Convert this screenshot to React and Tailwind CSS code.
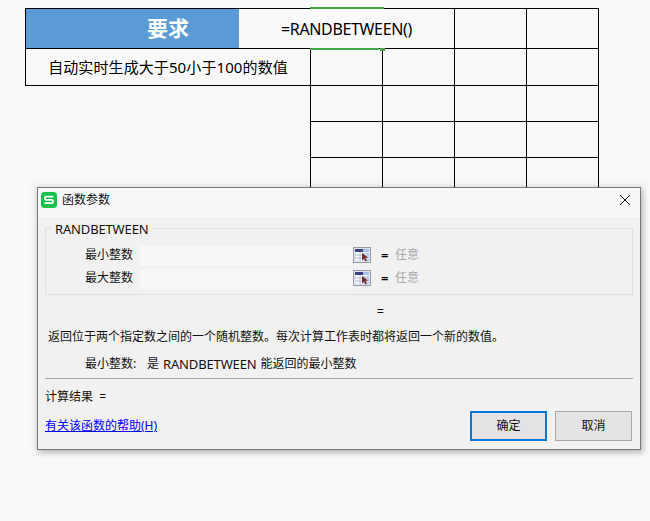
import React from 'react'

const line = 'border-black'

function RefIcon() {
  return (
    <svg width="18" height="16" viewBox="0 0 18 16" className="shrink-0 mb-[2px]">
      <rect x="0.5" y="0.5" width="17" height="15" fill="#eef0f6" stroke="#9a9aa6" />
      <rect x="2" y="2" width="14" height="12" fill="#fbfbff" stroke="#b4bbd6" strokeWidth="0.5" />
      <rect x="2" y="2" width="8" height="3" fill="#3a4280" />
      <rect x="10" y="2" width="6" height="3" fill="#a7c0ea" />
      <rect x="10" y="6" width="6" height="8" fill="#b8d0f4" />
      <path d="M2 8H10M2 11H10M7 5V14" stroke="#b4bbd0" strokeWidth="1" />
      <path d="M9 6L9 13.5L11 11.5L12.5 14.5L14 14L12.5 11L15 10.5Z" fill="#7a2a20" />
    </svg>
  )
}

function WpsLogo() {
  return (
    <svg width="16" height="16" viewBox="0 0 16 16" className="shrink-0">
      <rect width="16" height="16" rx="3.5" fill="#16c24a" />
      <path d="M12.5 4.6H5.2C3.4 4.6 3.4 7.8 5.2 7.8H10.8C12.6 7.8 12.6 11.2 10.8 11.2H3.5" fill="none" stroke="#fff" strokeWidth="1.7" />
    </svg>
  )
}

function ParamRow({ label }) {
  return (
    <div className="flex items-center h-[20px]">
      <span className="w-[87px] text-right text-[12px] leading-[18px] pb-[2px] text-[#111]">{label}</span>
      <div className="ml-[7px] w-[213px] h-[20px] bg-[#f8f7f6]" />
      <RefIcon />
      <span className="ml-[10px] w-[7px] text-[13px] font-semibold leading-[18px] pb-[2px] text-black">=</span>
      <span className="ml-[7px] text-[12px] leading-[18px] pb-[2px] text-[#a9a9a9]">任意</span>
    </div>
  )
}

function EmptyRow({ height }) {
  return (
    <div className={`grid grid-cols-[72px_72px_72px_72px] ${height}`}>
      <div className={`border-r border-b ${line}`} />
      <div className={`border-r border-b ${line}`} />
      <div className={`border-r border-b ${line}`} />
      <div className={`border-r border-b ${line}`} />
    </div>
  )
}

export default function App() {
  return (
    <div className="relative w-[650px] h-[521px] overflow-hidden bg-[#f9f9f9] pt-[8px] pl-[25px]">
      <div className="font-['Noto_Sans','Noto_Sans_CJK_SC',sans-serif] w-[574px]">
        {/* first row */}
        <div className={`flex h-[41px] border-t border-b border-l border-r ${line}`}>
          <div className="w-[213px] bg-[#5b9bd5] text-white font-bold text-[21px] flex items-center justify-end pr-[50px]">要求</div>
          <div className="relative w-[215px] flex items-center pl-[42px] text-[16px] text-black tracking-[-0.35px]">
            =RANDBETWEEN()
            <div className="absolute left-[71px] w-[74px] top-[-2px] h-[2px] bg-[#3fa845]" />
            <div className="absolute left-[71px] w-[69px] top-[39px] h-[2px] bg-[#3fa845]" />
            <div className="absolute left-[141px] w-[5px] top-[39px] h-[3px] bg-[#3fa845]" />
          </div>
          <div className={`w-[72px] border-l ${line}`} />
          <div className={`w-[72px] border-l ${line}`} />
        </div>
        {/* second row */}
        <div className="flex">
          <div className={`w-[286px] h-[37px] border-l border-b border-r ${line} flex items-center justify-center text-[15px] tracking-[0.1px] text-black`}>
            自动实时生成大于50小于100的数值
          </div>
          <EmptyRow height="h-[37px]" />
        </div>
        <div className={`ml-[285px] flex flex-col border-l ${line}`}>
          <EmptyRow height="h-[36px]" />
          <EmptyRow height="h-[36px]" />
          <EmptyRow height="h-[36px]" />
        </div>
      </div>

      {/* dialog */}
      <div className="absolute left-[37px] top-[187px] w-[604px] h-[263px] border border-[#77787a] bg-[#f1f1f1] shadow-[0_0_6px_3px_rgba(0,0,0,0.07),2px_3px_6px_rgba(0,0,0,0.2)] font-['Noto_Sans','Noto_Sans_CJK_SC',sans-serif] flex flex-col">
        <div className="h-[29px] shrink-0 bg-[#f8f8f8] flex items-center pl-[3px] pr-[9px] pb-[5px]">
          <WpsLogo />
          <span className="ml-[5px] text-[12px] text-[#111]">函数参数</span>
          <svg width="12" height="12" viewBox="0 0 12 12" className="ml-auto">
            <path d="M1 1L11 11M11 1L1 11" stroke="#111" strokeWidth="1" />
          </svg>
        </div>

        <div className="flex-1 px-[7px] pt-[11px] flex flex-col">
          <div className="relative h-[67px] w-[588px] border border-[#e1dfe1] pt-[17px] flex flex-col gap-[3px]">
            <span className="absolute left-[5px] top-[-7px] px-[4px] bg-[#f1f1f1] text-[13px] tracking-[-0.15px] leading-[14px] text-[#111]">RANDBETWEEN</span>
            <ParamRow label="最小整数" />
            <ParamRow label="最大整数" />
          </div>

          <div className="mt-[9px] ml-[332px] h-[16px] text-[12px] leading-[16px] text-black">=</div>
          <p className="mt-[9px] ml-[3px] text-[12px] leading-[16px] text-[#111]">返回位于两个指定数之间的一个随机整数。每次计算工作表时都将返回一个新的数值。</p>
          <p className="mt-[11px] ml-[40px] flex text-[12px] leading-[16px] text-[#111] whitespace-pre">
            <span className="w-[62px]">最小整数:</span>
            <span>是</span>
            <span className="ml-[4px] text-[13px] tracking-[-0.15px]">RANDBETWEEN</span>
            <span className="ml-[4px]">能返回的最小整数</span>
          </p>
          <div className="mt-[6px] h-[1px] w-[588px] bg-[#a8a8a8] shrink-0" />
          <p className="mt-[10px] text-[12px] leading-[16px] text-[#111] whitespace-pre">计算结果  =</p>

          <div className="mt-[6px] flex items-start">
            <a href="#" className="mt-[7px] text-[12px] leading-[16px] text-[#0000ff] underline">有关该函数的帮助(H)</a>
            <button className="ml-auto w-[77px] h-[30px] border-2 border-[#0078d7] bg-[#e4e2e4] text-[12px] text-[#111]">确定</button>
            <button className="ml-[8px] mr-[1px] w-[77px] h-[30px] border border-[#a9a9a9] bg-[#e4e2e4] text-[12px] text-[#111]">取消</button>
          </div>
        </div>
      </div>
    </div>
  )
}
